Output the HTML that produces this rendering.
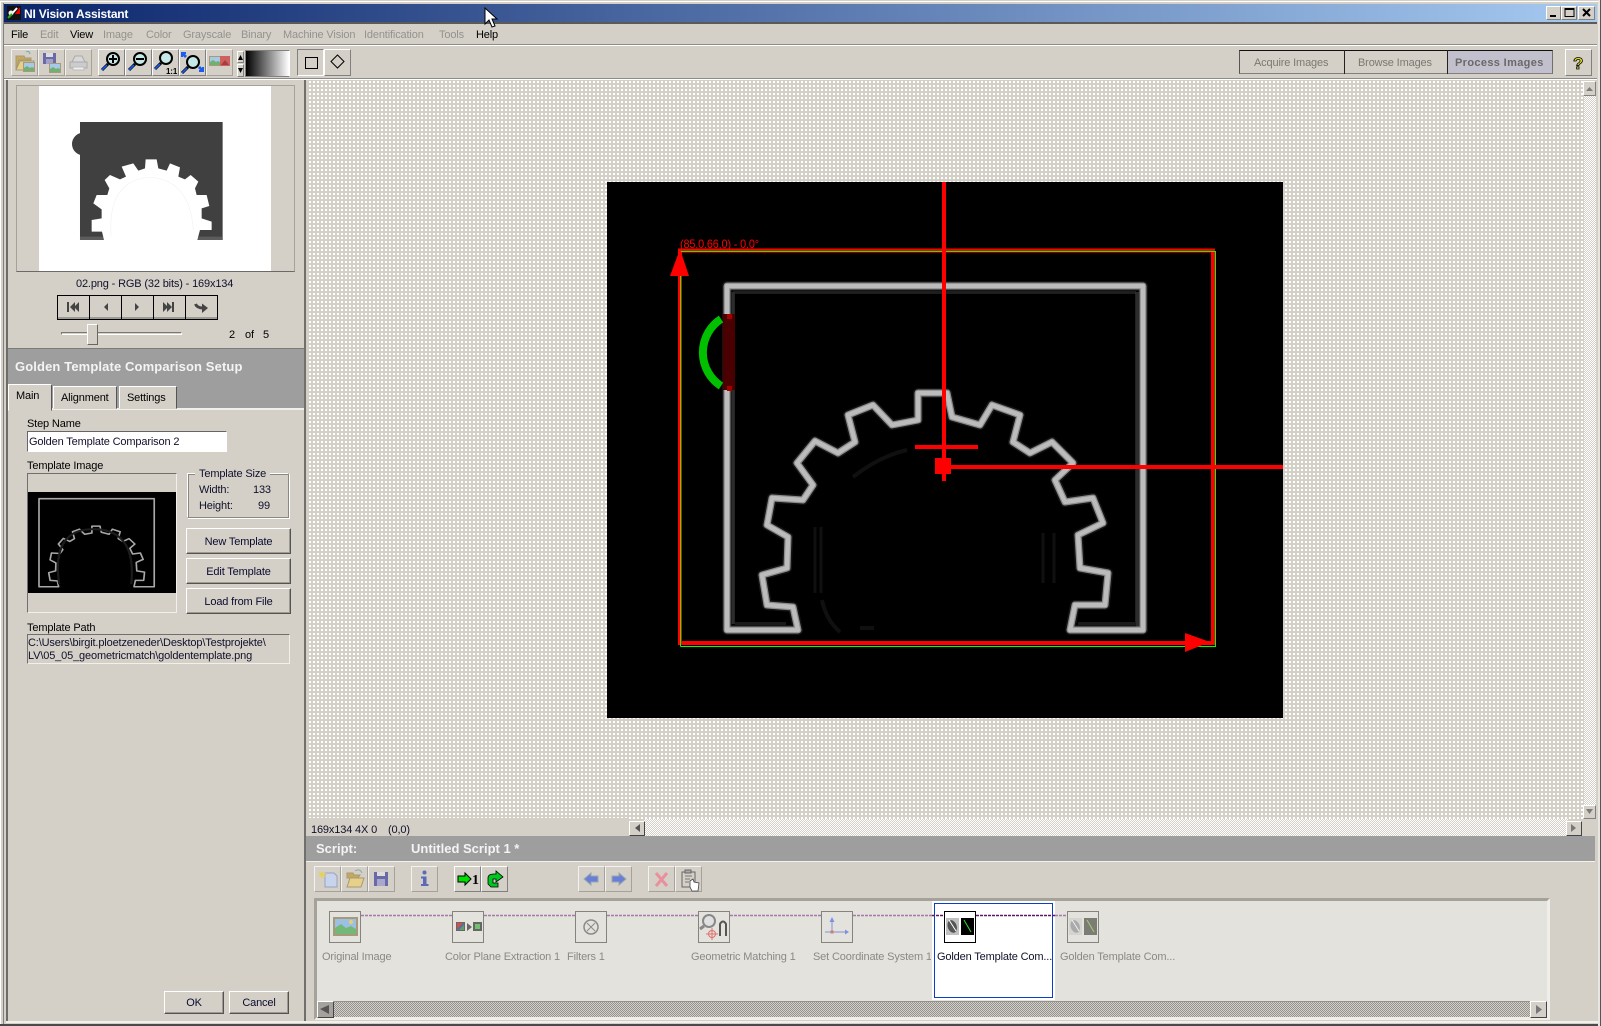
<!DOCTYPE html>
<html><head><meta charset="utf-8"><title>NI Vision Assistant</title>
<style>
html,body{margin:0;padding:0;background:#d4d0c8}
#r{position:relative;width:1601px;height:1026px;overflow:hidden;background:#d4d0c8;font:11px "Liberation Sans",sans-serif;letter-spacing:-.15px;color:#000}
#r div{position:absolute;box-sizing:border-box}
.t{white-space:nowrap;line-height:14px;height:14px;margin-top:1px}
.d{color:#94928c}
.s{color:#8b8986}
.b{background:#d4d0c8;border:1px solid;border-color:#fff #55534f #55534f #fff;box-shadow:inset -1px -1px 0 #9d9a93;text-align:center;line-height:27px;color:#0a0a30}
.f{background:#d4d0c8;border:1px solid;border-color:#f4f2ee #a5a29a #a5a29a #f4f2ee}
.e{background:#d4d0c8;border:1px solid;border-color:#fff #808080 #808080 #fff}
.i{border:1px solid #85837e;background:#e3e2dc}
.ch{background:conic-gradient(#fff 25%,#d4d0c8 0 50%,#fff 0 75%,#d4d0c8 0) 0 0/2px 2px}
.cg{background:conic-gradient(#94928e 25%,#d4d0c8 0 50%,#94928e 0 75%,#d4d0c8 0) 0 0/2px 2px}
</style></head><body><div id="r">

<!-- outer frame -->
<div style="left:0;top:0;width:1601px;height:1026px;background:#d4d0c8;border-top:1px solid #d4d0c8;box-shadow:inset 1px 1px 0 #fff"></div>
<div style="left:3px;top:3px;width:1595px;height:1021px;background:#d4d0c8;border-left:1px solid #808080"></div>
<div style="left:0;top:1024px;width:1601px;height:2px;background:#4a4a4a"></div>
<div style="left:1598px;top:0;width:3px;height:1026px;background:#e8e6e0;border-right:1px solid #555"></div>

<!-- title bar -->
<div style="left:4px;top:4px;width:1593px;height:18px;background:linear-gradient(90deg,#0a246a,#a6caf0)"></div>
<div class="t" style="left:24px;top:6px;color:#fff;font-weight:bold;font-size:12px;letter-spacing:-.2px">NI Vision Assistant</div>
<div class="e" style="left:1546px;top:6px;width:15px;height:14px"></div>
<div class="e" style="left:1561px;top:6px;width:16px;height:14px"></div>
<div class="e" style="left:1578px;top:6px;width:17px;height:14px"></div>
<div style="left:4px;top:22px;width:1593px;height:2px;background:#5c5a56"></div>

<!-- menu -->
<div class="t" style="left:11px;top:27px">File</div>
<div class="t d" style="left:40px;top:27px">Edit</div>
<div class="t" style="left:70px;top:27px">View</div>
<div class="t d" style="left:103px;top:27px">Image</div>
<div class="t d" style="left:146px;top:27px">Color</div>
<div class="t d" style="left:183px;top:27px">Grayscale</div>
<div class="t d" style="left:241px;top:27px">Binary</div>
<div class="t d" style="left:283px;top:27px">Machine Vision</div>
<div class="t d" style="left:364px;top:27px">Identification</div>
<div class="t d" style="left:439px;top:27px">Tools</div>
<div class="t" style="left:476px;top:27px">Help</div>
<div style="left:4px;top:44px;width:1593px;height:1px;background:#8e8c86"></div>
<div style="left:4px;top:45px;width:1593px;height:1px;background:#fff"></div>

<!-- toolbar -->
<div class="f" style="left:11px;top:49px;width:27px;height:27px"></div>
<div class="f" style="left:38px;top:49px;width:27px;height:27px"></div>
<div class="f" style="left:65px;top:49px;width:27px;height:27px"></div>
<div class="e" style="left:98px;top:49px;width:27px;height:27px"></div>
<div class="e" style="left:125px;top:49px;width:27px;height:27px"></div>
<div class="e" style="left:152px;top:49px;width:27px;height:27px"></div>
<div class="e" style="left:179px;top:49px;width:27px;height:27px"></div>
<div class="f" style="left:206px;top:49px;width:27px;height:27px"></div>
<div class="e" style="left:237px;top:51px;width:7px;height:12px"></div>
<div class="e" style="left:237px;top:64px;width:7px;height:13px"></div>
<div style="left:245px;top:50px;width:45px;height:27px;border:1px solid;border-color:#808080 #fff #808080 #808080;background:linear-gradient(90deg,#000,#fff)"></div>
<div style="left:297px;top:49px;width:27px;height:27px;background:#d4d0c8;border:1px solid;border-color:#808080 #fff #fff #808080"></div>
<div class="e" style="left:324px;top:49px;width:27px;height:27px"></div>
<div style="left:4px;top:78px;width:1593px;height:1px;background:#8e8c86"></div>
<div style="left:4px;top:79px;width:1593px;height:1px;background:#fff"></div>

<!-- mode tabs -->
<div style="left:1239px;top:50px;width:314px;height:24px;border:1px solid;border-color:#111 #707070 #808080 #555;background:#d4d0c8"></div>
<div style="left:1447px;top:51px;width:105px;height:22px;background:#c2c0cc"></div>
<div style="left:1344px;top:50px;width:1px;height:24px;background:#222"></div>
<div style="left:1447px;top:50px;width:1px;height:24px;background:#222"></div>
<div class="t" style="left:1254px;top:55px;color:#7a7870">Acquire Images</div>
<div class="t" style="left:1358px;top:55px;color:#7a7870">Browse Images</div>
<div class="t" style="left:1455px;top:55px;color:#6a6868;font-weight:bold;letter-spacing:.35px">Process Images</div>
<div class="e" style="left:1565px;top:49px;width:27px;height:27px"></div>

<!-- left panel -->
<div style="left:6px;top:80px;width:2px;height:941px;background:#6e6c68"></div>
<div style="left:304px;top:80px;width:2px;height:941px;background:#716f6b"></div>
<div style="left:16px;top:85px;width:279px;height:187px;background:#d4d0c8;border:1px solid;border-color:#a5a29a #a5a29a #6c6a66 #a5a29a"></div>
<div style="left:39px;top:86px;width:232px;height:185px;background:#fff"></div>
<div class="t" style="left:76px;top:276px;width:160px;color:#10102a">02.png - RGB (32 bits) - 169x134</div>
<div style="left:57px;top:295px;width:161px;height:25px;border:1px solid #000;background:#d4d0c8;box-shadow:inset 0 -2px 0 #9d9a93"></div>
<div style="left:89px;top:295px;width:1px;height:25px;background:#000"></div>
<div style="left:121px;top:295px;width:1px;height:25px;background:#000"></div>
<div style="left:153px;top:295px;width:1px;height:25px;background:#000"></div>
<div style="left:185px;top:295px;width:1px;height:25px;background:#000"></div>
<div style="left:61px;top:332px;width:121px;height:3px;border:1px solid;border-color:#7a7872 #fff #fff #7a7872"></div>
<div class="e" style="left:87px;top:324px;width:11px;height:21px;border-color:#fff #666 #666 #fff"></div>
<div class="t" style="left:229px;top:327px">2</div>
<div class="t" style="left:245px;top:327px">of</div>
<div class="t" style="left:263px;top:327px">5</div>

<div style="left:8px;top:348px;width:296px;height:61px;background:#9e9e9e;border-top:1px solid #7c7c7c"></div>
<div class="t" style="left:15px;top:359px;color:#f4f4f4;font-weight:bold;font-size:13px;letter-spacing:.12px">Golden Template Comparison Setup</div>
<div style="left:8px;top:408px;width:296px;height:2px;background:#f2f0ea"></div>
<div style="left:53px;top:386px;width:64px;height:23px;background:#d4d0c8;border:1px solid;border-color:#fff #555 #d4d0c8 #fff"></div>
<div style="left:119px;top:386px;width:58px;height:23px;background:#d4d0c8;border:1px solid;border-color:#fff #555 #d4d0c8 #fff"></div>
<div style="left:8px;top:384px;width:44px;height:27px;background:#d4d0c8;border:1px solid;border-color:#fff #555 #d4d0c8 #fff"></div>
<div class="t" style="left:16px;top:388px">Main</div>
<div class="t" style="left:61px;top:390px">Alignment</div>
<div class="t" style="left:127px;top:390px">Settings</div>

<div class="t" style="left:27px;top:416px">Step Name</div>
<div style="left:27px;top:431px;width:200px;height:21px;background:#fff;border:1px solid;border-color:#666 #fff #fff #666"></div>
<div class="t" style="left:29px;top:434px;color:#10102a">Golden Template Comparison 2</div>
<div class="t" style="left:27px;top:458px">Template Image</div>
<div style="left:27px;top:473px;width:150px;height:140px;border:1px solid;border-color:#716f6b #f2f0ea #f2f0ea #716f6b"></div>
<div style="left:28px;top:492px;width:148px;height:101px;background:#000"></div>

<div style="left:187px;top:473px;width:102px;height:45px;border:1px solid;border-color:#fff #8a8882 #8a8882 #fff;box-shadow:inset 1px 1px 0 #8a8882,1px 1px 0 #fff"></div>
<div class="t" style="left:195px;top:466px;padding:0 4px;background:#d4d0c8;color:#10102a">Template Size</div>
<div class="t" style="left:199px;top:482px;color:#10102a">Width:</div>
<div class="t" style="left:253px;top:482px;color:#10102a">133</div>
<div class="t" style="left:199px;top:498px;color:#10102a">Height:</div>
<div class="t" style="left:258px;top:498px;color:#10102a">99</div>

<div class="b" style="left:186px;top:528px;width:105px;height:26px">New Template</div>
<div class="b" style="left:186px;top:558px;width:105px;height:26px">Edit Template</div>
<div class="b" style="left:186px;top:588px;width:105px;height:26px">Load from File</div>

<div class="t" style="left:27px;top:620px">Template Path</div>
<div style="left:27px;top:634px;width:263px;height:30px;border:1px solid;border-color:#716f6b #f2f0ea #f2f0ea #716f6b"></div>
<div class="t" style="left:28px;top:635px;color:#10102a">C:\Users\birgit.ploetzeneder\Desktop\Testprojekte\</div>
<div class="t" style="left:28px;top:648px;color:#10102a">LV\05_05_geometricmatch\goldentemplate.png</div>

<div class="b" style="left:164px;top:991px;width:60px;height:23px;line-height:23px">OK</div>
<div class="b" style="left:229px;top:991px;width:60px;height:23px;line-height:23px">Cancel</div>
<div style="left:6px;top:1021px;width:1592px;height:2px;background:#f2f0ea"></div>

<!-- image viewer -->
<div style="left:307px;top:81px;width:1277px;height:738px;background:conic-gradient(#fff 25%,#d4d0c8 0) 0 0/4px 4px"></div>
<div class="ch" style="left:1584px;top:81px;width:12px;height:738px"></div>
<div class="e" style="left:1583px;top:81px;width:13px;height:15px"></div>
<div class="e" style="left:1583px;top:805px;width:13px;height:14px"></div>
<div style="left:307px;top:818px;width:322px;height:18px;background:#d4d0c8"></div>
<div class="ch" style="left:644px;top:819px;width:924px;height:17px"></div>
<div class="e" style="left:629px;top:821px;width:16px;height:15px;border-color:#fff #444 #444 #fff"></div>
<div class="e" style="left:1566px;top:821px;width:16px;height:15px;border-color:#fff #444 #444 #fff"></div>
<div class="t" style="left:311px;top:822px;color:#10102a">169x134 4X 0</div>
<div class="t" style="left:388px;top:822px;color:#10102a">(0,0)</div>
<div style="left:607px;top:182px;width:676px;height:536px;background:#000"></div>

<!-- script panel -->
<div style="left:306px;top:836px;width:1289px;height:25px;background:#9e9e9e"></div>
<div style="left:306px;top:861px;width:1289px;height:1px;background:#f2f0ea"></div>
<div class="t" style="left:316px;top:841px;color:#f4f4f4;font-weight:bold;font-size:13px;letter-spacing:0">Script:</div>
<div class="t" style="left:411px;top:841px;color:#f4f4f4;font-weight:bold;font-size:13px;letter-spacing:0">Untitled Script 1 *</div>
<div class="f" style="left:314px;top:866px;width:27px;height:26px"></div>
<div class="f" style="left:341px;top:866px;width:27px;height:26px"></div>
<div class="f" style="left:368px;top:866px;width:27px;height:26px"></div>
<div class="f" style="left:411px;top:866px;width:27px;height:26px"></div>
<div class="e" style="left:454px;top:866px;width:27px;height:26px"></div>
<div class="e" style="left:481px;top:866px;width:27px;height:26px"></div>
<div class="f" style="left:578px;top:866px;width:27px;height:26px"></div>
<div class="f" style="left:605px;top:866px;width:27px;height:26px"></div>
<div class="f" style="left:648px;top:866px;width:27px;height:26px"></div>
<div class="f" style="left:675px;top:866px;width:27px;height:26px"></div>

<div style="left:314px;top:898px;width:1236px;height:122px;background:#e3e2dc;border:3px solid;border-color:#a5a29a #f0eee8 #f0eee8 #a5a29a"></div>
<div style="left:932px;top:901px;width:123px;height:99px;background:#fff"></div>
<div style="left:934px;top:903px;width:119px;height:95px;border:1px solid #0a3fc8"></div>
<div class="cg" style="left:317px;top:1001px;width:1230px;height:16px;border-top:1px solid #94928e"></div>
<div class="e" style="left:317px;top:1001px;width:17px;height:17px;border-color:#fff #444 #444 #fff;background:#a5a29e"></div>
<div class="e" style="left:1530px;top:1001px;width:17px;height:17px;border-color:#fff #444 #444 #fff"></div>

<div class="i" style="left:329px;top:911px;width:32px;height:32px"></div>
<div class="i" style="left:452px;top:911px;width:32px;height:32px"></div>
<div class="i" style="left:575px;top:911px;width:32px;height:32px"></div>
<div class="i" style="left:698px;top:911px;width:32px;height:32px"></div>
<div class="i" style="left:821px;top:911px;width:32px;height:32px"></div>
<div class="i" style="left:944px;top:911px;width:32px;height:32px;border-color:#000;background:#fff"></div>
<div class="i" style="left:1067px;top:911px;width:32px;height:32px"></div>
<div class="t s" style="left:322px;top:949px">Original Image</div>
<div class="t s" style="left:445px;top:949px">Color Plane Extraction 1</div>
<div class="t s" style="left:567px;top:949px">Filters 1</div>
<div class="t s" style="left:691px;top:949px">Geometric Matching 1</div>
<div class="t s" style="left:813px;top:949px;width:118px;overflow:hidden">Set Coordinate System 1</div>
<div class="t" style="left:937px;top:949px;color:#10102a">Golden Template Com...</div>
<div class="t s" style="left:1060px;top:949px">Golden Template Com...</div>

<!-- graphics overlay -->
<svg style="position:absolute;left:0;top:0" width="1601" height="1026" viewBox="0 0 1601 1026">
<defs>
<path id="gr" fill="none" stroke-linejoin="round" d="M727 630V286H1143V630H1070L1075 605H1105L1108 573L1080 568L1078 535L1103 523L1093 498L1065 502L1055 480L1073 463L1052 442L1030 453L1013 442L1020 415L992 405L980 425L952 417L947 393H918L918 420L892 425L873 405L848 415L855 442L838 453L815 441L797 463L813 485L803 500L772 498L767 525L788 537L787 568L762 575L767 605L793 607L798 630Z"/>
<g id="ph"><rect width="12" height="10" fill="#a89a78"/><rect x="1" y="1" width="10" height="8" fill="#a8c8e8"/><path d="M1 9V6L4 4L7 6L9 5L11 6V9Z" fill="#70b070"/></g>
<g id="mg"><circle cx="0" cy="0" r="6" fill="#c6e8e8" stroke="#000" stroke-width="2"/><path d="M-5 5L-11 11" stroke="#000" stroke-width="3"/><path d="M-6 6L-11 11" stroke="#1c5cf0" stroke-width="1.6"/></g>
</defs>

<!-- window buttons -->
<path d="M1550 16h6" stroke="#000" stroke-width="2"/>
<rect x="1565" y="8.500" width="9" height="8" fill="none" stroke="#000"/><path d="M1565 9h9" stroke="#000" stroke-width="2"/>
<path d="M1583 9l7 7M1590 9l-7 7" stroke="#000" stroke-width="2"/>
<!-- title icon -->
<rect x="7" y="6" width="14" height="14" fill="#111"/><path d="M9 17L17 8" stroke="#fff" stroke-width="2"/><circle cx="11" cy="13" r="2.500" fill="#eee"/><path d="M15 14L20 7V14Z" fill="#e00"/><path d="M8 18L12 14" stroke="#2a2" stroke-width="2"/>

<!-- cursor -->
<path d="M485 8V24L489 20L492 27L495 26L492 19H497Z" fill="#fff" stroke="#000"/>

<!-- disabled toolbar -->
<path d="M16 56H24L25 58H31V60H19L16 70Z" fill="#c4a860" stroke="#a89a70"/><path d="M16 70L20 61H34L30 70Z" fill="#e6d08a" stroke="#a89a70"/>
<use href="#ph" x="23" y="62"/><path d="M26 52Q29 50 30 54" stroke="#7aa" fill="none"/>
<path d="M43 53H56V64H43Z" fill="#6a6aa8"/><rect x="46" y="53" width="7" height="4" fill="#ddd"/><rect x="46" y="59" width="7" height="5" fill="#a0a0c8"/>
<use href="#ph" x="49" y="63"/>
<path d="M72 62L75 56H82L85 62" fill="#d8d8d8" stroke="#aaa"/><rect x="70" y="62" width="17" height="6" fill="#ccc" stroke="#aaa"/><rect x="73" y="67" width="11" height="3" fill="#eee" stroke="#bbb"/>
<use href="#mg" transform="translate(113 59)"/><path d="M109 59h8M113 55v8" stroke="#000" stroke-width="2"/>
<use href="#mg" transform="translate(140 59)"/><path d="M136 59h8" stroke="#000" stroke-width="2"/>
<use href="#mg" transform="translate(166 58)"/>
<text x="166" y="74" font-family="Liberation Sans" font-size="8" font-weight="bold" fill="#000">1:1</text>
<use href="#mg" transform="translate(193 62)"/><path d="M181 52h5v2l-1 0 2 2-2 2-2-2 0 1h-2ZM204 72h-5v-2h1l-2-2 2-2 2 2 0-1h2Z" fill="#1c5cf0"/>
<use href="#ph" x="209" y="56"/><rect x="220" y="56" width="10" height="10" fill="#d06060"/><path d="M221 65L225 60L229 65Z" fill="#a04040"/>
<path d="M240.500 55L238 60H243Z" fill="#000"/><path d="M240.500 73L238 68H243Z" fill="#000"/>
<rect x="305.500" y="57.500" width="12" height="11" fill="none" stroke="#000"/>
<path d="M337.500 55L344 61.500L337.500 68L331 61.500Z" fill="none" stroke="#000"/>
<text x="1573" y="69" font-family="Liberation Sans" font-size="17" font-weight="bold" fill="#e8e020" stroke="#000" stroke-width=".8">?</text>
<path d="M1586 91H1593L1589.500 87Z" fill="#7a7a7a"/>
<path d="M1586 809H1593L1589.500 814Z" fill="#7a7a7a"/>
<path d="M640 824V832L635 828Z" fill="#555"/>
<path d="M1571 824V832L1576 828Z" fill="#777"/>

<!-- nav icons -->
<g fill="#444"><rect x="67" y="302" width="2" height="10"/><path d="M75 302V312L70 307ZM79 302V312L74 307Z"/>
<path d="M108 303V311L104 307Z"/><path d="M135 303V311L139 307Z"/>
<path d="M163 302V312L168 307ZM167 302V312L172 307Z"/><rect x="172" y="302" width="2" height="10"/></g>
<path d="M195.500 304Q197 308 203 308" fill="none" stroke="#444" stroke-width="3"/><path d="M202 303.500L208 308L202 313Z" fill="#444"/>

<!-- thumbnail -->
<g transform="translate(0 80) scale(.3333)">
<rect x="240" y="126" width="428" height="354" fill="#404040"/><rect x="240" y="470" width="428" height="10" fill="#5c5c5c"/>
<circle cx="250" cy="192" r="34" fill="#404040"/>
<path d="M312 480L306 455H275V420L305 415L305 388L280 370L290 345L322 345L328 325L314 300L330 285L360 298L378 290L365 260L400 250L415 272L435 265L437 238H470L475 265L500 272L510 250L540 262L535 290L555 298L572 285L595 305L585 325L590 345H620L628 378L605 385L605 415L635 425V450H600L592 480Z" fill="#fff"/>
<path d="M333 470Q322 300 450 292Q570 300 580 450" fill="none" stroke="#f2f2f2" stroke-width="2"/>
</g>

<!-- template image -->
<g transform="translate(39 498.700) scale(.277 .256) translate(-727 -286)">
<use href="#gr" stroke="#a8a8a8" stroke-width="6"/>
<path d="M800 620Q770 400 930 405Q1080 410 1060 620" fill="none" stroke="#1c1c1c" stroke-width="8"/>
</g>

<!-- main image -->
<path d="M733 292V624M733 292H1136" stroke="#1e1e1e" stroke-width="4" fill="none"/>
<path d="M1137.500 292V628" stroke="#444" stroke-width="4" fill="none"/>
<path d="M735 624H786M1078 624H1136" stroke="#1a1a1a" stroke-width="4" fill="none"/>
<use href="#gr" stroke="#141414" stroke-width="10"/>
<path d="M733 292V624M1137.500 292V628" stroke="#2c2c2c" stroke-width="3" fill="none"/>
<use href="#gr" stroke="#8c8c8c" stroke-width="7"/>
<use href="#gr" stroke="#bcbcbc" stroke-width="4.500"/>
<path d="M815 527V593M821 527V593M1043 533V583M1054 533V583" stroke="#101010" stroke-width="3" fill="none"/>
<path d="M853 477Q880 456 907 450M822 600Q826 620 840 632M860 628h14" stroke="#101010" stroke-width="4" fill="none"/>

<path d="M723 314V390H735V314Z" fill="#4a0000"/>
<rect x="727" y="314" width="5" height="5" fill="#a00000"/><rect x="727" y="386" width="5" height="5" fill="#a00000"/>
<path d="M721 319A40 40 0 0 0 721 386" fill="none" stroke="#00c000" stroke-width="8"/>

<!-- overlays -->
<rect x="680" y="250.500" width="533" height="392.500" fill="none" stroke="#f00" stroke-width="4"/>
<path d="M680.500 646.500V251.500H1215.500V646.500H680.500" fill="none" stroke="#0f0" stroke-width="1"/>
<path d="M680 249L689 276H670Z" fill="#f00"/>
<path d="M1185 633L1210 642L1185 652Z" fill="#f00"/>
<rect x="942" y="182" width="4" height="299" fill="#f00"/>
<rect x="950" y="465" width="333" height="4" fill="#f00"/>
<rect x="915" y="445" width="63" height="4" fill="#f00"/>
<rect x="935" y="458" width="16" height="16" fill="#f00"/>
<text x="680" y="248" font-family="Liberation Sans" font-size="12" fill="#f00" textLength="79" lengthAdjust="spacingAndGlyphs">(85,0,66,0) - 0,0°</text>

<!-- script toolbar icons -->
<path d="M325 873H334L337 876V887H325Z" fill="#c8d4ec" stroke="#9aa0c0"/><path d="M322 871l1.500 3 3-1.500-2 2.500 2 2.500-3-1.500-1.500 3-1-3-3 1 2-2.500-2-2.500 3 1z" fill="#e8d050"/>
<path d="M347 873H353L354 875H360L358 878H347Z" fill="#c4a860" stroke="#a89a70"/><path d="M347 887L350 878H364L361 887Z" fill="#e6d08a" stroke="#a89a70"/><path d="M355 871Q360 868 362 873" stroke="#8aa" fill="none"/>
<path d="M374 872H388V886H374Z" fill="#6a6aa8"/><rect x="377" y="872" width="8" height="4" fill="#ddd"/><rect x="377" y="879" width="8" height="7" fill="#a8a8cc"/>
<circle cx="424.500" cy="872.500" r="2" fill="#5a6ab8"/><path d="M421 876.500H426.500V884H428.500V886H421V884H423V878.500H421Z" fill="#5a6ab8"/>
<path d="M458 876H465V873L471 879L465 885V882H458Z" fill="#00e000" stroke="#000"/>
<text x="472" y="884" font-family="Liberation Serif" font-size="14" font-weight="bold" fill="#000">1</text>
<path d="M488 884V878Q488 874 494 874H496V871L503 877L496 882V879H493V883H498V887H491Z" fill="#00c820" stroke="#000" stroke-width=".8"/>
<path d="M584 879L591 873V876H598V882H591V885Z" fill="#6a7ed8" stroke="#9aa"/>
<path d="M626 879L619 873V876H612V882H619V885Z" fill="#6a7ed8" stroke="#9aa"/>
<path d="M656 873L667 886M667 873L656 886" stroke="#e8909c" stroke-width="3"/>
<rect x="682" y="872" width="13" height="15" fill="#d4d0c8" stroke="#666"/><path d="M685 876h7M685 879h5M685 882h4" stroke="#777"/><rect x="685" y="870" width="6" height="3" fill="#aaa" stroke="#666"/>
<path d="M690 881V887L692 891H698L699 883L694 882L693 879Z" fill="#fff" stroke="#444" stroke-width=".8"/>

<!-- wires -->
<path d="M361 915.500H452M484 915.500H575M607 915.500H698M730 915.500H821M853 915.500H932" stroke="#a878a8" stroke-width="1.500" stroke-dasharray="3 1" fill="none"/>
<path d="M1055 915.500H1067" stroke="#a878a8" stroke-width="1.500" stroke-dasharray="3 1"/>
<path d="M932 915.500H944M976 915.500H1055" stroke="#5a1c66" stroke-width="1.500" stroke-dasharray="3 1"/>

<!-- step icons -->
<rect x="333" y="917" width="25" height="19" fill="#a89a78"/><rect x="335" y="919" width="21" height="15" fill="#9cc0e4"/><path d="M335 934V928L341 924L346 928L351 926L356 929V934Z" fill="#74b878"/><circle cx="351" cy="922" r="2" fill="#e8d070"/>
<rect x="456" y="922" width="9" height="9" fill="#666"/><path d="M457 930L464 923V930Z" fill="#60a060"/><path d="M457 923H463L457 929Z" fill="#d05050"/><path d="M458 930L464 924" stroke="#5060d0" stroke-width="1"/>
<path d="M467 923V931L472 927Z" fill="#666"/><rect x="473" y="922" width="9" height="9" fill="#666"/><rect x="475" y="924" width="5" height="5" fill="#70c070"/>
<circle cx="591" cy="927" r="7" fill="none" stroke="#8a8a8a" stroke-width="1.500"/><path d="M587 923l8 8M595 923l-8 8" stroke="#8a8a8a"/>
<circle cx="709" cy="921" r="6" fill="#e0e0e0" stroke="#888" stroke-width="2"/><path d="M704 926L700 929" stroke="#888" stroke-width="3"/>
<circle cx="712" cy="934" r="3.500" fill="none" stroke="#e07070"/><path d="M706 934h12M712 928v12" stroke="#e07070"/>
<path d="M720 936V924Q723 919 726 924V936" fill="none" stroke="#555" stroke-width="2"/>
<path d="M832 918V932H846" fill="none" stroke="#8090e0"/><path d="M829.500 922L832 917L834.500 922Z M845 929.500L849 932L845 934.500Z" fill="#8090e0"/><rect x="830.500" y="930.500" width="3" height="3" fill="#d08060"/><path d="M825 932h6" stroke="#8090e0"/>
<rect x="946" y="918" width="13" height="17" fill="#c0c0c0"/><ellipse cx="952" cy="926.500" rx="4.500" ry="6.500" fill="#555" transform="rotate(-20 952 926)"/><path d="M949 920L956 931" stroke="#fff" stroke-width="1"/>
<rect x="961" y="918" width="13" height="17" fill="#000"/><path d="M964 920L971 932" stroke="#30e030" stroke-width="1"/>
<rect x="1069" y="918" width="13" height="17" fill="#d4d4d0"/><ellipse cx="1075" cy="926.500" rx="4.500" ry="6.500" fill="#aaa" transform="rotate(-20 1075 926)"/><path d="M1072 920L1079 931" stroke="#eee"/>
<rect x="1084" y="918" width="13" height="17" fill="#7c7c74"/><path d="M1087 920L1094 932" stroke="#a0d070"/>
<path d="M320 1009L329 1005V1014Z" fill="#555"/>
<path d="M1536 1005V1014L1542 1009.500Z" fill="#777"/>
</svg>

</div></body></html>
